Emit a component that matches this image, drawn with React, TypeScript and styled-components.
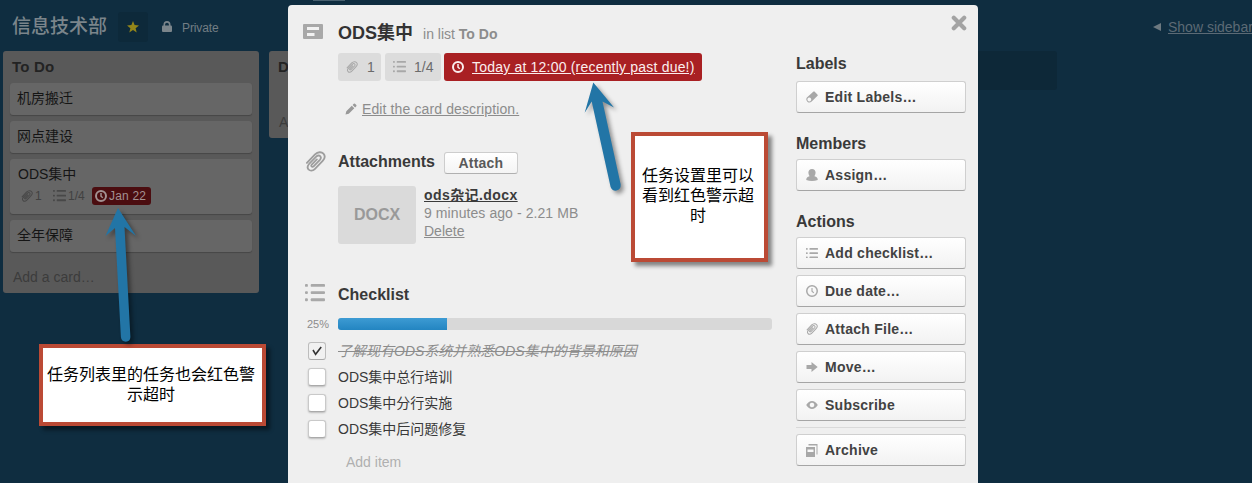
import React from 'react';
import styled, { createGlobalStyle } from 'styled-components';

const Global = createGlobalStyle`
  * { box-sizing: border-box; }
  html, body { margin: 0; padding: 0; overflow: hidden; }
  body {
    font-family: "Liberation Sans", "Noto Sans CJK SC", sans-serif;
    font-size: 14px;
    line-height: 18px;
    color: #393939;
  }
`;

const Page = styled.div`
  position: relative;
  width: 1252px;
  height: 483px;
  overflow: hidden;
  background: #0f2d40;
`;

/* ---------- board ---------- */
const Header = styled.header`
  display: flex;
  align-items: center;
  height: 51px;
  padding: 2px 0 0 12px;
  color: #737d84;
  white-space: nowrap;
  & > * { flex: none; }
`;
const BoardName = styled.h1`
  margin: 0;
  width: 106px;
  font-size: 19px;
  line-height: 24px;
  font-weight: 500;
  color: #7b858b;
`;
const StarButton = styled.div`
  display: flex;
  align-items: center;
  justify-content: center;
  width: 30px;
  height: 30px;
  margin-right: 14px;
  border-radius: 3px;
  background: #0d293a;
`;
const Privacy = styled.span`
  width: 37px;
  margin-left: 10px;
  padding-top: 2px;
  font-size: 12px;
  letter-spacing: -0.1px;
`;
const SidebarLink = styled.div`
  display: flex;
  align-items: center;
  gap: 7px;
  margin-left: 934px;
  color: #5c6a75;
  text-decoration: underline;
`;
const Lists = styled.div`
  display: flex;
  align-items: flex-start;
  gap: 10px;
  padding-left: 3px;
`;
const List = styled.section<{ $h: number }>`
  flex: none;
  width: 256px;
  height: ${p => p.$h}px;
  padding: 0 7px;
  border-radius: 3px;
  background: #595959;
`;
const NewList = styled.div`
  flex: none;
  width: 256px;
  height: 39px;
  border-radius: 3px;
  background: #0d2838;
`;
const ListTitle = styled.h2`
  margin: 0;
  height: 32px;
  padding: 1px 0 0 2px;
  font-size: 15px;
  line-height: 30px;
  letter-spacing: 0.2px;
  color: #232323;
`;
const Card = styled.article<{ $h: number }>`
  width: 242px;
  height: ${p => p.$h}px;
  margin-bottom: 6px;
  padding: 6px 8px 0 7px;
  border-radius: 3px;
  background: #666;
  box-shadow: 0 1px 1px #464646;
  color: #151515;
  line-height: 19px;
`;
const CardText = styled.span`
  padding-left: 1px;
`;
const CardBadges = styled.div`
  display: flex;
  align-items: center;
  height: 18px;
  margin: 3px 0 0 4px;
  font-size: 12px;
  color: #414141;
`;
const MiniBadge = styled.span<{ $w: number }>`
  display: flex;
  align-items: center;
  gap: 2px;
  width: ${p => p.$w}px;
`;
const DueMini = styled.span`
  display: flex;
  align-items: center;
  gap: 2px;
  width: 59px;
  height: 18px;
  padding-left: 3px;
  border-radius: 3px;
  background: #4b0d10;
  color: #a39192;
  letter-spacing: 0.2px;
`;
const AddCard = styled.div<{ $top: number }>`
  padding: ${p => p.$top}px 0 0 3px;
  color: #3c3c3c;
`;

/* ---------- card window ---------- */
const Dialog = styled.main`
  position: absolute;
  left: 288px;
  top: 5px;
  display: flex;
  width: 690px;
  height: 490px;
  border-radius: 4px;
  background: #efefef;
`;
const Main = styled.div`
  width: 508px;
`;
const Row = styled.div<{ $h: number; $mt?: number; $pt?: number }>`
  display: grid;
  grid-template-columns: 35px 1fr;
  align-items: center;
  height: ${p => p.$h}px;
  margin-top: ${p => p.$mt || 0}px;
  padding: ${p => p.$pt || 0}px 0 0 15px;
  white-space: nowrap;
`;
const Gutter = styled.div<{ $x?: number; $pb?: number }>`
  display: flex;
  padding-left: ${p => p.$x || 0}px;
  padding-bottom: ${p => p.$pb || 0}px;
`;
const Inline = styled.div`
  display: flex;
  align-items: center;
`;
const Title = styled.h2`
  margin: 3px 0 0;
  font-size: 18px;
  line-height: 24px;
  color: #333;
`;
const InList = styled.span`
  margin: 5px 0 0 10px;
  color: #8c8c8c;
`;
const Badges = styled.div`
  display: flex;
  height: 28px;
  padding-left: 50px;
`;
const Badge = styled.span<{ $w: number; $gap: number; $due?: boolean }>`
  display: flex;
  align-items: center;
  width: ${p => p.$w}px;
  margin-right: ${p => p.$gap}px;
  padding-left: 8px;
  border-radius: 3px;
  white-space: nowrap;
  background: ${p => (p.$due ? '#a92023' : '#dcdcdc')};
  color: ${p => (p.$due ? '#fbeeee' : '#6b6b6b')};
`;
const BadgeText = styled.span<{ $x: number; $due?: boolean }>`
  margin-left: ${p => p.$x}px;
  text-decoration: ${p => (p.$due ? 'underline' : 'none')};
  letter-spacing: ${p => (p.$due ? '0.2px' : '0')};
`;
const EditDescription = styled.div`
  display: flex;
  align-items: center;
  gap: 5px;
  height: 18px;
  margin-top: 19px;
  padding-left: 57px;
  color: #8c8c8c;
`;
const Link = styled.a<{ $ls?: number }>`
  text-decoration: underline;
  letter-spacing: ${p => p.$ls || 0}px;
`;
const Heading = styled.h3`
  margin: 0;
  font-size: 16px;
  line-height: 20px;
  color: #393939;
`;
const AttachButton = styled.button`
  width: 74px;
  height: 22px;
  margin: 2px 0 0 9px;
  padding: 0;
  border: 1px solid #cdcdcd;
  border-bottom-color: #b0b0b0;
  border-radius: 3px;
  background: linear-gradient(#fff, #f4f4f4);
  font: bold 14px/18px "Liberation Sans", sans-serif;
  letter-spacing: 0.2px;
  color: #5a5a5a;
`;
const Attachment = styled.div`
  display: flex;
  margin: 10px 0 0 50px;
  height: 58px;
`;
const Thumb = styled.div`
  display: flex;
  align-items: center;
  justify-content: center;
  width: 78px;
  height: 58px;
  margin-right: 8px;
  border-radius: 3px;
  background: #dadada;
  color: #999;
  font-size: 16px;
  font-weight: bold;
`;
const FileInfo = styled.div`
  color: #8c8c8c;
  white-space: nowrap;
  & > div { height: 18px; line-height: 18px; }
`;
const FileName = styled.div`
  font-weight: bold;
  text-decoration: underline;
  color: #3b3b3b;
  letter-spacing: 0.42px;
`;
const FileMeta = styled.div`
  letter-spacing: 0.08px;
`;
const Percent = styled.span`
  font-size: 11px;
  color: #8c8c8c;
`;
const Track = styled.div`
  width: 434px;
  height: 12px;
  border-radius: 3px;
  overflow: hidden;
  background: #d8d8d8;
`;
const Fill = styled.div`
  width: 25.1%;
  height: 100%;
  background: linear-gradient(#3d9bd3, #2385c1);
`;
const Items = styled.div`
  padding-top: 2px;
`;
const Checkbox = styled.span<{ $on?: boolean }>`
  display: flex;
  align-items: center;
  justify-content: center;
  width: 18px;
  height: 18px;
  border: 1px solid ${p => (p.$on ? '#bdbdbd' : '#c9c9c9')};
  border-bottom-color: #aaa;
  border-radius: 3px;
  background: ${p => (p.$on ? '#f1f1f1' : '#fff')};
  box-shadow: ${p => (p.$on ? 'none' : '0 1px 2px rgba(0,0,0,.22)')};
`;
const ItemText = styled.span<{ $done?: boolean }>`
  color: ${p => (p.$done ? '#8c8c8c' : '#393939')};
  font-style: ${p => (p.$done ? 'italic' : 'normal')};
  text-decoration: ${p => (p.$done ? 'line-through' : 'none')};
`;
const AddItem = styled.div`
  padding: 11px 0 0 58px;
  color: #b0b0b0;
`;

const Side = styled.aside`
  width: 170px;
  padding-top: 49px;
`;
const SideGroup = styled.div<{ $mb: number }>`
  margin-bottom: ${p => p.$mb}px;
`;
const SideHeading = styled(Heading)<{ $mb: number }>`
  margin-bottom: ${p => p.$mb}px;
`;
const SideButton = styled.button`
  display: flex;
  align-items: center;
  gap: 7px;
  width: 170px;
  height: 32px;
  margin-bottom: 6px;
  padding: 0 0 0 9px;
  border: 1px solid #cfcfcf;
  border-bottom-color: #a5a5a5;
  border-radius: 3px;
  background: linear-gradient(#fff, #f2f2f2);
  font: bold 14px/18px "Liberation Sans", sans-serif;
  letter-spacing: 0.25px;
  color: #424242;
`;
const Divider = styled.div`
  height: 1px;
  margin-bottom: 6px;
  background: #d9d9d9;
`;
const Close = styled.div`
  position: absolute;
  top: 10px;
  right: 11px;
  display: flex;
`;

/* ---------- annotations ---------- */
const Arrows = styled.svg`
  position: absolute;
  left: 0;
  top: 0;
  filter: drop-shadow(3px 3px 2px rgba(0, 0, 0, 0.4));
`;
const Callout = styled.div<{ $x: number; $y: number; $w: number; $h: number; $pad: number }>`
  position: absolute;
  left: ${p => p.$x}px;
  top: ${p => p.$y}px;
  width: ${p => p.$w}px;
  height: ${p => p.$h}px;
  padding: ${p => p.$pad}px 3px 0 0;
  border: 4px solid #bb4a35;
  background: #fff;
  box-shadow: 4px 4px 4px rgba(0, 0, 0, 0.45);
  color: #000;
  font-size: 16px;
  line-height: 20px;
  text-align: center;
  white-space: nowrap;
`;
const TabHint = styled.div`
  position: absolute;
  left: 313px;
  top: 0;
  width: 32px;
  height: 1px;
  background: #48606f;
`;

/* ---------- icons ---------- */
type IconProps = { size?: number; color?: string };

const ClipIcon = ({ size = 12, color = '#a8a8a8' }: IconProps) => (
  <svg width={size} height={size} viewBox="0 0 22 22" fill="none" stroke={color} strokeWidth="1.9" strokeLinecap="round">
    <path d="M2 12.5 L10.5 3.6 C13.5 .6 17.5 .8 19.3 2.8 C21.2 5 20.8 8 18.5 10.4 L10.2 19 C8 21.2 5.2 21 3.8 19.4 C2.3 17.8 2.6 15.5 4.3 13.6 L12 5.7 C13.4 4.3 15.2 4.5 16 5.5 C17 6.7 16.7 8 15.6 9.2 L9 16 C8.2 16.8 7.3 16.7 6.9 16.1 C6.4 15.5 6.6 14.7 7.3 14 L12.4 8.8" />
  </svg>
);
const ListIcon = ({ size = 13, color = '#a8a8a8' }: IconProps) => (
  <svg width={size} height={(size * 18) / 21} viewBox="0 0 21 18" fill={color}>
    <rect x="0" y="0" width="3" height="3" rx="1" /><rect x="6" y="0" width="15" height="3" rx="1" />
    <rect x="0" y="7.5" width="3" height="3" rx="1" /><rect x="6" y="7.5" width="15" height="3" rx="1" />
    <rect x="0" y="15" width="3" height="3" rx="1" /><rect x="6" y="15" width="15" height="3" rx="1" />
  </svg>
);
const ClockIcon = ({ size = 12, color = '#a8a8a8', w = 2 }: IconProps & { w?: number }) => (
  <svg width={size} height={size} viewBox="0 0 12 12" fill="none" stroke={color}>
    <circle cx="6" cy="6" r={6 - w / 2} strokeWidth={w} />
    <path d="M6 3v3.2l1.8 1.6" strokeWidth={w * 0.75} />
  </svg>
);
const PencilIcon = () => (
  <svg width="12" height="12" viewBox="0 0 12 12" fill="#999">
    <path d="M.5 11.5 1.3 8.2 6.8 2.8 9.3 5.3 3.8 10.7zM7.6 2 8.8.8Q9.4.3 10 .8L11.3 2.1Q11.8 2.7 11.3 3.3L10.1 4.5z" />
  </svg>
);
const CardIcon = () => (
  <svg width="20" height="15" viewBox="0 0 20 15">
    <rect width="20" height="15" rx="1" fill="#a8a8a8" />
    <path d="M4 3h12v3H4zM4 9h7.5v3H4z" fill="#f2f2f2" />
  </svg>
);
const StarIcon = () => (
  <svg width="12" height="12" viewBox="0 0 12 12" fill="#93861a">
    <path d="M6 0 7.6 4.1 12 4.4 8.6 7.2 9.7 11.5 6 9.1 2.3 11.5 3.4 7.2 0 4.4 4.4 4.1z" />
  </svg>
);
const LockIcon = () => (
  <svg width="10" height="11" viewBox="0 0 10 11">
    <path d="M2.3 6V3.6a2.7 2.7 0 0 1 5.4 0V6" fill="none" stroke="#7b858b" strokeWidth="1.6" />
    <rect y="4.5" width="10" height="6.5" rx="1" fill="#7b858b" />
  </svg>
);
const CloseIcon = () => (
  <svg width="16" height="16" viewBox="0 0 16 16" stroke="#a3a3a3" strokeWidth="4.2" strokeLinecap="round">
    <path d="M2.8 2.8 13.2 13.2M13.2 2.8 2.8 13.2" />
  </svg>
);
const TagIcon = () => (
  <svg width="12" height="12" viewBox="0 0 12 12" fill="#a8a8a8">
    <path fillRule="evenodd" d="M7.5 .6Q8 .2 8.5 .6L11.6 3.7Q12 4.2 11.6 4.7L5.7 10.5Q3.7 12.3 1.6 11Q-.7 8.8 .9 6.5zM3.3 6.6a1.9 1.9 0 1 0 .01 0z" />
  </svg>
);
const PersonIcon = () => (
  <svg width="12" height="12" viewBox="0 0 12 12" fill="#a8a8a8">
    <path d="M6 0C8.2 0 9.6 1.5 9.6 3.6 9.5 5.2 9.1 6.2 8.5 6.9V7.3L10.4 8Q11.8 8.8 11.8 11Q9 12 6 12T.2 11Q.2 8.8 1.6 8L3.5 7.3V6.9C2.9 6.2 2.5 5.2 2.4 3.6 2.4 1.5 3.8 0 6 0z" />
  </svg>
);
const MoveIcon = () => (
  <svg width="12" height="12" viewBox="0 0 12 12" fill="#a8a8a8">
    <path d="M.5 4H5.5V1L11.7 6 5.5 11V8H.5z" />
  </svg>
);
const EyeIcon = () => (
  <svg width="12" height="12" viewBox="0 0 12 12" fill="#a8a8a8">
    <path fillRule="evenodd" d="M.2 6Q2.8 2 6 2T11.8 6Q9.2 10 6 10T.2 6zM6 3.7a2.3 2.3 0 1 0 .01 0z" />
  </svg>
);
const ArchiveIcon = () => (
  <svg width="12" height="13" viewBox="0 0 12 13" fill="#a8a8a8">
    <path d="M2.5 0H11.5V10.5H10.5V1.5H2.5z" />
    <path fillRule="evenodd" d="M0 3H9V13H0zM1.5 5.5V8H7.5V5.5z" />
  </svg>
);

const actions: [React.ReactNode, string][] = [
  [<ListIcon size={12} />, 'Add checklist…'],
  [<ClockIcon w={1.5} />, 'Due date…'],
  [<ClipIcon />, 'Attach File…'],
  [<MoveIcon />, 'Move…'],
  [<EyeIcon />, 'Subscribe'],
];
const openItems = ['ODS集中总行培训', 'ODS集中分行实施', 'ODS集中后问题修复'];

export default function App() {
  return (
    <Page>
      <Global />
      <Header>
        <BoardName>信息技术部</BoardName>
        <StarButton><StarIcon /></StarButton>
        <LockIcon />
        <Privacy>Private</Privacy>
        <SidebarLink>
          <svg width="8" height="8" viewBox="0 0 8 8" fill="#6d7980"><path d="M0 4 8 0V8z" /></svg>
          <span>Show sidebar</span>
        </SidebarLink>
      </Header>
      <Lists>
        <List $h={242}>
          <ListTitle>To Do</ListTitle>
          <Card $h={32}>机房搬迁</Card>
          <Card $h={32}>网点建设</Card>
          <Card $h={55}>
            <CardText>ODS集中</CardText>
            <CardBadges>
              <MiniBadge $w={32}><ClipIcon color="#484848" />1</MiniBadge>
              <MiniBadge $w={39}><ListIcon color="#484848" size={13} />1/4</MiniBadge>
              <DueMini><ClockIcon color="#a39192" size={12} />Jan 22</DueMini>
            </CardBadges>
          </Card>
          <Card $h={32}>全年保障</Card>
          <AddCard $top={10}>Add a card…</AddCard>
        </List>
        <List $h={87}>
          <ListTitle>Doing</ListTitle>
          <AddCard $top={30}>Add a card…</AddCard>
        </List>
        <List $h={87} />
        <NewList />
      </Lists>
      <TabHint />

      <Dialog>
        <Main>
          <Row $h={48} $pt={5}>
            <Gutter><CardIcon /></Gutter>
            <Inline>
              <Title>ODS集中</Title>
              <InList>in list <b>To Do</b></InList>
            </Inline>
          </Row>
          <Badges>
            <Badge $w={43} $gap={4}><ClipIcon /><BadgeText $x={9}>1</BadgeText></Badge>
            <Badge $w={56} $gap={3}><ListIcon /><BadgeText $x={8}>1/4</BadgeText></Badge>
            <Badge $w={258} $gap={0} $due>
              <ClockIcon color="#fbeeee" /><BadgeText $x={8} $due>Today at 12:00 (recently past due!)</BadgeText>
            </Badge>
          </Badges>
          <EditDescription><PencilIcon /><Link $ls={0.12}>Edit the card description.</Link></EditDescription>
          <Row $h={28} $mt={30}>
            <Gutter $x={2} $pb={2}><ClipIcon size={21} color="#9d9d9d" /></Gutter>
            <Inline>
              <Heading>Attachments</Heading>
              <AttachButton>Attach</AttachButton>
            </Inline>
          </Row>
          <Attachment>
            <Thumb>DOCX</Thumb>
            <FileInfo>
              <FileName>ods杂记.docx</FileName>
              <FileMeta>9 minutes ago - 2.21 MB</FileMeta>
              <div><Link>Delete</Link></div>
            </FileInfo>
          </Attachment>
          <Row $h={36} $mt={32} $pt={1}>
            <Gutter $x={2} $pb={3}><ListIcon size={20} /></Gutter>
            <Heading>Checklist</Heading>
          </Row>
          <Row $h={24}>
            <Gutter $x={4}><Percent>25%</Percent></Gutter>
            <Track><Fill /></Track>
          </Row>
          <Items>
            <Row $h={26}>
              <Gutter $x={5}>
                <Checkbox $on>
                  <svg width="10" height="10" viewBox="0 0 10 10" fill="none" stroke="#333" strokeWidth="1.6"><path d="M1 4 3.6 8.3 9.2 1" /></svg>
                </Checkbox>
              </Gutter>
              <ItemText $done>了解现有ODS系统并熟悉ODS集中的背景和原因</ItemText>
            </Row>
            {openItems.map(t => (
              <Row $h={26} key={t}>
                <Gutter $x={5}><Checkbox /></Gutter>
                <ItemText>{t}</ItemText>
              </Row>
            ))}
          </Items>
          <AddItem>Add item</AddItem>
        </Main>
        <Side>
          <SideGroup $mb={21}>
            <SideHeading $mb={7}>Labels</SideHeading>
            <SideButton><TagIcon />Edit Labels…</SideButton>
          </SideGroup>
          <SideGroup $mb={21}>
            <SideHeading $mb={5}>Members</SideHeading>
            <SideButton><PersonIcon />Assign…</SideButton>
          </SideGroup>
          <SideHeading $mb={5}>Actions</SideHeading>
          {actions.map(([icon, label]) => (
            <SideButton key={label}>{icon}{label}</SideButton>
          ))}
          <Divider />
          <SideButton><ArchiveIcon />Archive</SideButton>
        </Side>
        <Close><CloseIcon /></Close>
      </Dialog>

      <Callout $x={39} $y={344} $w={227} $h={82} $pad={17}>任务列表里的任务也会红色警<br />示超时</Callout>
      <Callout $x={631} $y={132} $w={137} $h={130} $pad={30}>任务设置里可以<br />看到红色警示超<br />时</Callout>
      <Arrows width="1252" height="483" viewBox="0 0 1252 483" fill="#2275a6">
        <path d="M118 208 136 236 124.5 227 130.4 337Q130.2 341.5 125.8 341.7 121.4 341.5 120.9 337L115 228 105.5 236z" />
        <path d="M593.3 82.5 614 107.5 602.5 101.5 620.7 184.5Q621 189.5 616.5 190.6 612 191 610.6 187L591.7 101.5 584.7 112.7z" />
      </Arrows>
    </Page>
  );
}
